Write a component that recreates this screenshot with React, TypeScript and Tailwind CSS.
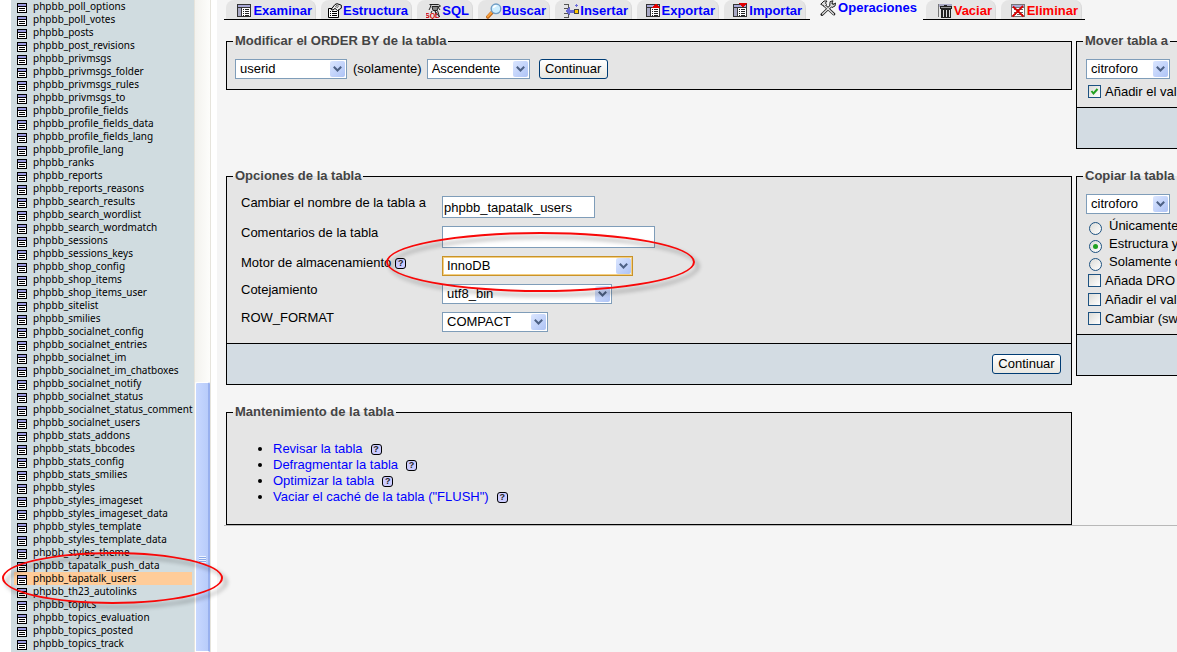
import React from "react";

const tables = [
  "phpbb_poll_options", "phpbb_poll_votes", "phpbb_posts", "phpbb_post_revisions",
  "phpbb_privmsgs", "phpbb_privmsgs_folder", "phpbb_privmsgs_rules", "phpbb_privmsgs_to",
  "phpbb_profile_fields", "phpbb_profile_fields_data", "phpbb_profile_fields_lang", "phpbb_profile_lang",
  "phpbb_ranks", "phpbb_reports", "phpbb_reports_reasons", "phpbb_search_results",
  "phpbb_search_wordlist", "phpbb_search_wordmatch", "phpbb_sessions", "phpbb_sessions_keys",
  "phpbb_shop_config", "phpbb_shop_items", "phpbb_shop_items_user", "phpbb_sitelist",
  "phpbb_smilies", "phpbb_socialnet_config", "phpbb_socialnet_entries", "phpbb_socialnet_im",
  "phpbb_socialnet_im_chatboxes", "phpbb_socialnet_notify", "phpbb_socialnet_status",
  "phpbb_socialnet_status_comment", "phpbb_socialnet_users", "phpbb_stats_addons",
  "phpbb_stats_bbcodes", "phpbb_stats_config", "phpbb_stats_smilies", "phpbb_styles",
  "phpbb_styles_imageset", "phpbb_styles_imageset_data", "phpbb_styles_template",
  "phpbb_styles_template_data", "phpbb_styles_theme", "phpbb_tapatalk_push_data",
  "phpbb_tapatalk_users", "phpbb_th23_autolinks", "phpbb_topics", "phpbb_topics_evaluation",
  "phpbb_topics_posted", "phpbb_topics_track",
];

const current = "phpbb_tapatalk_users";

function TableIcon() {
  return (
    <svg width="10" height="10" viewBox="0 0 10 10" shapeRendering="crispEdges" className="block shrink-0" aria-hidden="true">
      <rect width="10" height="10" fill="#000" />
      <rect x="1" y="1" width="8" height="2" fill="#9a9ade" />
      <rect x="1" y="4" width="8" height="5" fill="#fff" />
      <rect x="2" y="5" width="6" height="1" fill="#000" />
      <rect x="2" y="7" width="6" height="1" fill="#000" />
    </svg>
  );
}

function Grid({ children }: { children?: React.ReactNode }) {
  return (
    <>
      <rect x="0" y="1" width="14" height="13" fill="#333" />
      <rect x="1" y="2" width="12" height="2" fill="#a9a9d8" />
      <rect x="1" y="5" width="3" height="8" fill="#a9a9c4" />
      <rect x="5" y="5" width="8" height="8" fill="#fff" />
      <path d="M6 6h1v1h-1zM8 6h4v1h-4zM6 8h1v1h-1zM8 8h4v1h-4zM6 10h1v1h-1zM8 10h4v1h-4zM6 12h1v1h-1zM8 12h4v1h-4z" fill="#222" />
      {children}
    </>
  );
}

function TabIcon({ kind }: { kind: string }) {
  return (
    <svg width="16" height="16" viewBox="0 0 16 16" className="shrink-0" aria-hidden="true">
      {kind === "browse" && <g shapeRendering="crispEdges"><Grid /></g>}
      {kind === "structure" && (
        <g>
          <path d="M1.500 5.500h10v9h-10z" fill="#fff" stroke="#000" />
          <path d="M3 8.500h1M5 8.500h5M3 10.500h1M5 10.500h5M3 12.500h1M5 12.500h5" stroke="#000" />
          <path d="M4 6.500l4-5 2-.8 4.300 1.500v3L10.500 7.500 8 5.500 6 7z" fill="#eee" stroke="#000" strokeLinejoin="round" />
          <path d="M8 3.500l3 1M9 2.300l3 1" stroke="#444" strokeWidth=".8" />
        </g>
      )}
      {kind === "sql" && (
        <g>
          <path d="M3.500 1.500h9l2 1.500-1.500 1M5 2L4 5l-1 2" fill="#ccc" stroke="#222" />
          <path d="M6 3.500h6.500l-1.500 4h-4z" fill="#888" stroke="#222" />
          <path d="M6 8l-1 2M9 8l4.500 6M11.500 7.500l2 6.500M9 8l1.500 4M12 4l2 3" fill="none" stroke="#222" />
          <text x="-1" y="15" fontSize="7" fontWeight="bold" fill="#d00000" fontFamily="Liberation Sans, sans-serif">SQL</text>
        </g>
      )}
      {kind === "search" && (
        <g>
          <path d="M1.800 14L6 9.500" stroke="#b65f16" strokeWidth="3.400" strokeLinecap="round" />
          <path d="M1.800 13.500L6 9" stroke="#f9a03c" strokeWidth="2" strokeLinecap="round" />
          <circle cx="10" cy="5.800" r="4.800" fill="#cdeeff" stroke="#6f9cc4" strokeWidth="1.400" />
          <path d="M7.500 5a3 3 0 013-2.300" stroke="#fff" strokeWidth="1.500" fill="none" />
        </g>
      )}
      {kind === "insert" && (
        <g shapeRendering="crispEdges">
          <path d="M0 1h5v1H0zM4 1h1v4H4zM0 5h4v1H0zM0 10h4v1H0zM4 11h1v4H4zM0 14h5v1H0z" fill="#555" />
          <path d="M1 8l5-4v3h4v3H6v3z" fill="#6a6ad8" />
          <path d="M12 1h1v1h1v1h-1v1h-1V3h-1V2h1z" fill="#6a6ad8" />
          <path d="M10 6h5v5h-5z" fill="#444" />
          <path d="M11 7h3v3h-3z" fill="#ffc800" />
        </g>
      )}
      {kind === "export" && (
        <g shapeRendering="crispEdges"><Grid><path d="M6 5l4-5 4 5z" fill="#e00000" /></Grid></g>
      )}
      {kind === "import" && (
        <g shapeRendering="crispEdges"><Grid><path d="M6 0h8l-4 5z" fill="#e00000" /></Grid></g>
      )}
      {kind === "tools" && (
        <g strokeLinecap="round">
          <path d="M4 5L13.800 14M12.500 4.500L2 14.500" stroke="#222" strokeWidth="3" />
          <path d="M1 4l3-3h3L5.500 3l1 1.500-2 2-1.500-1zM10.500 1.500L13 .8 11.800 3.500l1.500 1L15.500 3l-.5 3-3 1.500-2-2z" fill="#ddd" stroke="#222" />
          <path d="M5 6l8.500 8M11 6l-8.500 8" stroke="#e4e4e4" strokeWidth="1.200" />
        </g>
      )}
      {kind === "empty" && (
        <g shapeRendering="crispEdges">
          <rect x="0" y="1" width="14" height="3" fill="#a9a9c4" />
          <rect x="0" y="1" width="1" height="13" fill="#777" />
          <path d="M6 2h3v1h5v3H2V3h4z" fill="#222" />
          <path d="M3 6h10v9H3z" fill="#222" />
          <path d="M5 7h1v7H5zM8 7h1v7H8zM11 7h1v7h-1z" fill="#ddd" />
          <path d="M3 4h10v1H3z" fill="#999" />
        </g>
      )}
      {kind === "drop" && (
        <g>
          <g shapeRendering="crispEdges">
            <rect x="0" y="1" width="14" height="13" fill="#777" />
            <rect x="1" y="2" width="12" height="2" fill="#a9a9d8" />
            <rect x="1" y="5" width="12" height="8" fill="#fff" />
            <path d="M3 6h2v1H3zM6 6h6v1H6zM3 9h2v1H3zM6 9h6v1H6zM3 11h2v1H3zM6 11h6v1H6z" fill="#666" />
          </g>
          <path d="M2 3.500L12.500 13.500M12 3L1.500 13.500" stroke="#d80000" strokeWidth="1.800" />
        </g>
      )}
    </svg>
  );
}

const tabs = [
  { label: "Examinar", icon: "browse", width: "w-[90px]" },
  { label: "Estructura", icon: "structure", width: "w-[91px]" },
  { label: "SQL", icon: "sql", width: "w-[56px]" },
  { label: "Buscar", icon: "search", width: "w-[72px]" },
  { label: "Insertar", icon: "insert", width: "w-[77px]" },
  { label: "Exportar", icon: "export", width: "w-[82px]" },
  { label: "Importar", icon: "import", width: "w-[82px]" },
];

const dangerTabs = [
  { label: "Vaciar", icon: "empty", width: "w-[70px]" },
  { label: "Eliminar", icon: "drop", width: "w-[81px]" },
];

function Tab({ label, icon, width, danger = false }: { label: string; icon: string; width: string; danger?: boolean }) {
  return (
    <a
      href="#"
      className={`flex h-full shrink-0 items-center justify-end rounded-t-lg border-r border-[#d9d9d9] bg-[#e5e5e5] pr-[3px] pt-0.5 text-[13px] leading-4 font-bold ${width} ${danger ? "text-[#ff0000]" : "text-[#0000ff]"}`}
    >
      <TabIcon kind={icon} />
      {label}
    </a>
  );
}

function Select({ label, id, value, width, focused = false }: { label?: string; id: string; value: string; width: string; focused?: boolean }) {
  return (
    <span className={`relative block h-5 shrink-0 ${width}`}>
      <select
        id={id}
        aria-label={label}
        className={`block h-5 w-full appearance-none border bg-white pl-1 pr-5 text-[13px] leading-4 text-black ${focused ? "border-[#c8932a] shadow-[inset_0_0_0_1px_#f5cf82]" : "border-[#7f9db9]"}`}
      >
        <option>{value}</option>
      </select>
      <span className="pointer-events-none absolute right-0.5 top-0.5 flex h-4 w-[15px] items-center justify-center rounded-xs bg-linear-to-br from-[#dbe6ff] to-[#aec3f5]">
        <svg width="9" height="6" viewBox="0 0 9 6" aria-hidden="true">
          <path d="M.8.800l3.700 3.700L8.200.800" fill="none" stroke="#4d6185" strokeWidth="2" />
        </svg>
      </span>
    </span>
  );
}

function Continue() {
  return (
    <button
      type="submit"
      className="h-5 w-[69px] shrink-0 rounded-[3px] border border-[#003c74] bg-linear-to-b from-white to-[#e9e8e2] text-[13px] leading-4 text-black"
    >
      Continuar
    </button>
  );
}

function Panel({ title, footer, className = "", children }: { title: string; footer?: React.ReactNode; className?: string; children: React.ReactNode }) {
  return (
    <fieldset className={`min-w-0 self-start border border-black bg-[#e5e5e5] ${className}`}>
      <legend className="ml-1.5 px-0.5 text-[13px] leading-4 font-bold whitespace-nowrap text-[#444444]">{title}</legend>
      {children}
      {footer !== undefined && (
        <div className="flex h-[41px] items-center justify-end border-t border-black bg-[#d3dce3] pr-2.5">{footer}</div>
      )}
    </fieldset>
  );
}

function Help() {
  return (
    <a
      href="#"
      aria-label="Documentación"
      className="inline-flex size-[11px] items-center justify-center rounded-[3px] border border-black bg-[#ccccff] text-[9px] leading-[9px] font-bold text-[#222]"
    >
      ?
    </a>
  );
}

function Check({ label, checked = false }: { label: string; checked?: boolean }) {
  return (
    <label className="flex h-[19px] items-center whitespace-nowrap">
      <span className="relative ml-0.5 mr-1 size-[13px] shrink-0">
        <input type="checkbox" defaultChecked={checked} className="peer block size-[13px] appearance-none border border-[#1d5281] bg-linear-to-br from-[#dcdcd7] to-white" />
        <svg viewBox="0 0 13 13" className="pointer-events-none absolute inset-0 hidden peer-checked:block" aria-hidden="true">
          <path d="M3.500 6l2 2.500 4-4.500" fill="none" stroke="#21a121" strokeWidth="2" />
        </svg>
      </span>
      {label}
    </label>
  );
}

function Radio({ label, checked = false }: { label: string; checked?: boolean }) {
  return (
    <label className="flex h-[18px] items-center whitespace-nowrap">
      <span className="relative ml-[3px] mr-[7px] mt-1 size-[13px] shrink-0">
        <input type="radio" name="copy" defaultChecked={checked} className="peer block size-[13px] appearance-none rounded-full border border-[#1d5281] bg-linear-to-br from-[#dcdcd7] to-white" />
        <span className="pointer-events-none absolute left-1 top-1 hidden size-[5px] rounded-full bg-[#21a121] peer-checked:block" />
      </span>
      {label}
    </label>
  );
}

function Mark({ className }: { className: string }) {
  return (
    <span
      aria-hidden="true"
      className={`pointer-events-none absolute z-10 rounded-[50%] border-2 border-[#f80808] drop-shadow-[4px_4px_2px_rgba(0,0,0,0.4)] ${className}`}
    />
  );
}

const links = ["Revisar la tabla", "Defragmentar la tabla", "Optimizar la tabla", 'Vaciar el caché de la tabla ("FLUSH")'];

export default function App() {
  return (
    <div className="flex h-screen overflow-hidden bg-[#f5f5f5] font-['Liberation_Sans',Arial,sans-serif] text-[13px] leading-4 text-black">
      <aside className="flex shrink-0 bg-white pl-[11px]">
        <nav className="w-[183px] bg-[#d0dce0] pl-[3px] pr-0.5">
          <ul>
            {tables.map((name) => (
              <li key={name} className="relative">
                <a
                  href="#"
                  className={`flex h-[13px] items-center pl-[3px] font-['Noto_Sans',Tahoma,sans-serif] text-[10px] leading-[13px] ${name === current ? "bg-[#ffcc99]" : ""}`}
                >
                  <span className="pt-[3px]"><TableIcon /></span>
                  <span className="ml-1.5 shrink-0 whitespace-nowrap">{name}</span>
                </a>
                {name === current && <Mark className="-left-3 -top-5 h-[52px] w-[221px]" />}
              </li>
            ))}
          </ul>
        </nav>
        <div className="flex w-[17px] flex-col border-x border-[#e6e4dc] bg-linear-to-r from-[#f3f2ee] to-[#fdfdfb] pt-[382px]">
          <div className="flex grow flex-col items-center rounded-t-xs border border-r-2 border-white border-r-[#98b0ee] bg-linear-to-r from-[#c8d8ff] to-[#b8ccfa] pt-[173px]">
            <span className="h-[7px] w-[7px] bg-[repeating-linear-gradient(to_bottom,#eef4ff_0_1px,#8caae6_1px_2px)]" />
          </div>
        </div>
        <div className="w-1.5 bg-white" />
      </aside>

      <main className="flex min-w-0 grow flex-col">
        <div className="pl-[7px]">
          <nav className="flex h-5">
            <div className="flex shrink-0 gap-[5px] border-b border-black px-0.5 pr-1">
              {tabs.map((t) => <Tab key={t.label} {...t} />)}
            </div>
            <a href="#" className="flex h-4 w-[113px] shrink-0 items-center justify-center pl-1 text-[13px] leading-4 font-bold text-[#0000ff]">
              <TabIcon kind="tools" />
              <span className="ml-0.5">Operaciones</span>
            </a>
            <div className="flex shrink-0 gap-[5px] border-b border-black px-[3px]">
              {dangerTabs.map((t) => <Tab key={t.label} {...t} danger />)}
            </div>
          </nav>
        </div>

        <div className="ml-[7px] grid grid-cols-[minmax(0,1fr)_101px] gap-x-1 gap-y-[19px] overflow-hidden border-b border-[#b8b8b8] pl-0.5 pt-[13px]">
          <Panel title="Modificar el ORDER BY de la tabla">
            <form className="flex items-center px-2 pb-2.5 pt-2.5">
              <Select id="order-field" label="Columna" value="userid" width="w-[112px]" />
              <span className="ml-1.5 mr-[5px]">(solamente)</span>
              <Select id="order-dir" label="Orden" value="Ascendente" width="w-[103px]" />
              <span className="ml-[9px] flex"><Continue /></span>
            </form>
          </Panel>

          <Panel title="Mover tabla a" className="border-r-0" footer={null}>
            <div className="flex flex-col gap-[3px] px-[9px] pb-[6px] pt-2.5">
              <Select id="move-db" label="Base de datos" value="citroforo" width="w-[84px]" />
              <Check label="Añadir el val" checked />
            </div>
          </Panel>

          <Panel title="Opciones de la tabla" footer={<Continue />}>
            <div className="grid grid-cols-[201px_minmax(0,1fr)] grid-rows-[30px_30px_28px_28px_28px] items-center pb-[7px] pl-3.5 pt-2">
              <label htmlFor="name" className="pb-2">Cambiar el nombre de la tabla a</label>
              <input id="name" defaultValue="phpbb_tapatalk_users" className="h-[22px] w-[153px] border border-[#7f9db9] bg-white px-px" />
              <label htmlFor="comment" className="pb-2">Comentarios de la tabla</label>
              <input id="comment" className="h-[22px] w-[213px] border border-[#7f9db9] bg-white px-px" />
              <div className="flex items-center gap-1 pb-1.5">
                <label htmlFor="engine">Motor de almacenamiento</label>
                <Help />
              </div>
              <div className="relative flex">
                <Select id="engine" value="InnoDB" width="w-[191px]" focused />
                <Mark className="-left-14 -top-6 h-[60px] w-[309px]" />
              </div>
              <label htmlFor="collation" className="pb-2">Cotejamiento</label>
              <div className="flex"><Select id="collation" value="utf8_bin" width="w-[170px]" /></div>
              <label htmlFor="row-format" className="pb-2">ROW_FORMAT</label>
              <div className="flex"><Select id="row-format" value="COMPACT" width="w-[106px]" /></div>
            </div>
          </Panel>

          <Panel title="Copiar la tabla" className="border-r-0" footer={null}>
            <div className="pb-[6px] pl-[9px] pt-2.5">
              <Select id="copy-db" label="Base de datos" value="citroforo" width="w-[84px]" />
              <div className="pt-[3px]">
                <Radio label="Únicamente" />
                <Radio label="Estructura y" checked />
                <Radio label="Solamente d" />
                <Check label="Añada DRO" />
                <Check label="Añadir el val" />
                <Check label="Cambiar (sw" />
              </div>
            </div>
          </Panel>

          <Panel title="Mantenimiento de la tabla">
            <ul className="list-disc pb-[19px] pl-[46px] pt-[21px]">
              {links.map((text) => (
                <li key={text}>
                  <span className="flex items-center gap-2">
                    <a href="#" className="text-[#0000ff]">{text}</a>
                    <Help />
                  </span>
                </li>
              ))}
            </ul>
          </Panel>
        </div>
      </main>
    </div>
  );
}
